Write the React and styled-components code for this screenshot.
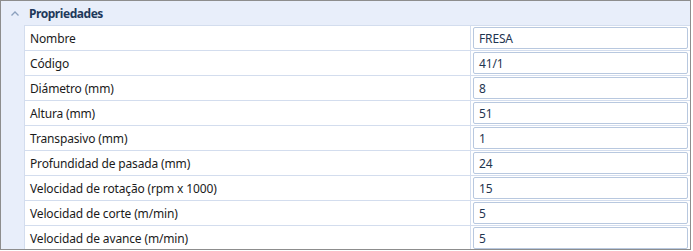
import React from 'react';
import styled, { createGlobalStyle } from 'styled-components';

const GlobalStyle = createGlobalStyle`
  body {
    margin: 0;
    background: #ffffff;
    font-family: "Noto Sans", "Open Sans", sans-serif;
  }
`;

const Window = styled.div`
  width: 689px;
  height: 248px;
  border: 1px solid #8d8d8d;
  display: flex;
  flex-direction: column;
  overflow: hidden;
  background: #ffffff;
`;

const Header = styled.div`
  height: 24px;
  flex: none;
  display: flex;
  align-items: center;
  background: #e8eefa;
`;

const Chevron = styled.svg`
  width: 8px;
  height: 5px;
  margin-left: 10px;
  margin-right: 10px;
`;

const Title = styled.span`
  font-size: 12px;
  font-weight: 700;
  letter-spacing: -0.45px;
  color: #1e395b;
`;

const Body = styled.div`
  display: flex;
  flex: 1;
  min-height: 0;
`;

const Gutter = styled.div`
  width: 23px;
  flex: none;
  background: #e8eefa;
  border-right: 1px solid #d3ddee;
`;

const Rows = styled.div`
  flex: 1;
  display: flex;
  flex-direction: column;
`;

const Row = styled.div`
  display: flex;
  height: 24px;
  flex: none;
  border-top: 1px solid #d3ddee;
`;

const Label = styled.div`
  width: 440px;
  padding-left: 5px;
  border-right: 1px solid #d3ddee;
  font-size: 12px;
  letter-spacing: -0.15px;
  line-height: 25px;
  color: #1b1b1b;
  white-space: nowrap;
`;

const ValueCell = styled.div`
  flex: 1;
  padding: 1px 2px 0 2px;
`;

const Field = styled.div`
  height: 20px;
  border: 1px solid #b8c8df;
  border-radius: 2px;
  padding-left: 5px;
  font-size: 12px;
  letter-spacing: -0.15px;
  line-height: 21px;
  color: #1f3550;
`;

const props = [
  ['Nombre', 'FRESA'],
  ['Código', '41/1'],
  ['Diámetro (mm)', '8'],
  ['Altura (mm)', '51'],
  ['Transpasivo (mm)', '1'],
  ['Profundidad de pasada (mm)', '24'],
  ['Velocidad de rotação (rpm x 1000)', '15'],
  ['Velocidad de corte (m/min)', '5'],
  ['Velocidad de avance (m/min)', '5'],
];

export default function App() {
  return (
    <>
      <GlobalStyle />
      <Window>
        <Header>
          <Chevron viewBox="0 0 8 5">
            <path d="M0.5 4.5 L4 1 L7.5 4.5" fill="none" stroke="#8ba0bd" strokeWidth="1.3" />
          </Chevron>
          <Title>Propriedades</Title>
        </Header>
        <Body>
          <Gutter />
          <Rows>
            {props.map(([name, value]) => (
              <Row key={name}>
                <Label>{name}</Label>
                <ValueCell>
                  <Field>{value}</Field>
                </ValueCell>
              </Row>
            ))}
          </Rows>
        </Body>
      </Window>
    </>
  );
}
